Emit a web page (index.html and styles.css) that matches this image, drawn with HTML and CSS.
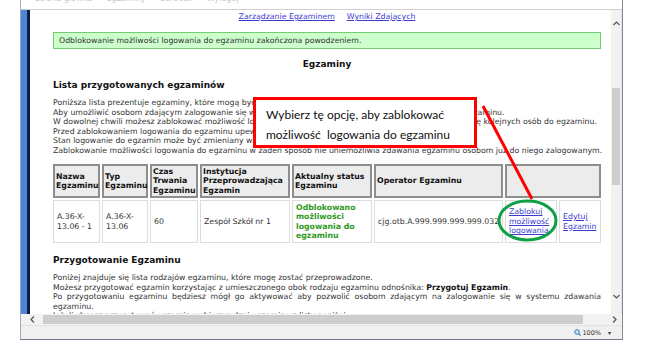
FILE: index.html
```html
<!DOCTYPE html>
<html lang="pl">
<head>
<meta charset="UTF-8">
<meta name="viewport" content="width=device-width, initial-scale=1.0">
<title>Egzaminy</title>
<link rel="stylesheet" href="styles.css">
</head>
<body>

<div class="window">
    <div class="toolbar"><span>Strona główna</span><span>Egzaminy</span><span>Ośrodek</span><span>Wyloguj</span></div>
    <div class="middle">
        <div class="frame-left"></div>
        <div class="page">
            <div class="menu">
                <a href="#">Zarządzanie Egzaminem</a>
                <a href="#">Wyniki Zdających</a>
            </div>
            <div class="notice">Odblokowanie możliwości logowania do egzaminu zakończona powodzeniem.</div>
            <h2>Egzaminy</h2>
            <h3>Lista przygotowanych egzaminów</h3>
            <p class="info">
                Poniższa lista prezentuje egzaminy, które mogą być przeprowadzone w ośrodku.<br>
                Aby umożliwić osobom zdającym zalogowanie się w systemie musisz najpierw odblokować logowanie do egzaminu.<br>
                W dowolnej chwili możesz zablokować możliwość logowania do egzaminu, żeby uniemożliwić zalogowanie się kolejnych osób do egzaminu.<br>
                Przed zablokowaniem logowania do egzaminu upewnij się, że wszyscy zdający zalogowali się do egzaminu.<br>
                Stan logowanie do egzamin może być zmieniany wielokrotnie.<br>
                Zablokowanie możliwości logowania do egzaminu w żaden sposób nie uniemożliwia zdawania egzaminu osobom już do niego zalogowanym.
            </p>
            <table class="exams">
                <colgroup>
                    <col style="width:47px"><col style="width:46px"><col style="width:48px"><col style="width:90px">
                    <col style="width:80px"><col style="width:129px"><col style="width:52px"><col style="width:42px">
                </colgroup>
                <tr class="head">
                    <th>Nazwa Egzaminu</th>
                    <th>Typ Egzaminu</th>
                    <th>Czas Trwania Egzaminu</th>
                    <th>Instytucja Przeprowadzająca Egzamin</th>
                    <th>Aktualny status Egzaminu</th>
                    <th>Operator Egzaminu</th>
                    <th colspan="2"></th>
                </tr>
                <tr class="row">
                    <td>A.36-X-<br>13.06 - 1</td>
                    <td>A.36-X-<br>13.06</td>
                    <td>60</td>
                    <td>Zespół Szkół nr 1</td>
                    <td class="status-ok">Odblokowano możliwości logowania do egzaminu</td>
                    <td>cjg.otb.A.999.999.999.999.032</td>
                    <td><a href="#">Zablokuj możliwość logowania</a></td>
                    <td><a href="#">Edytuj Egzamin</a></td>
                </tr>
            </table>
            <h3 class="second">Przygotowanie Egzaminu</h3>
            <p class="info justify">
                Poniżej znajduje się lista rodzajów egzaminu, które mogę zostać przeprowadzone.<br>
                Możesz przygotować egzamin korzystając z umieszczonego obok rodzaju egzaminu odnośnika: <b>Przygotuj Egzamin</b>.<br>
                Po przygotowaniu egzaminu będziesz mógł go aktywować aby pozwolić osobom zdającym na zalogowanie się w systemu zdawania egzaminu.<br>
                Jeżeli chcesz przygotować egzamin wybierz rodzaj egzaminu z listy poniżej.
            </p>
        </div>
        <div class="vscroll">
            <div class="arrow top"><svg width="7" height="5" viewBox="0 0 7 5"><polyline points="0.5,4 3.5,1 6.5,4" fill="none" stroke="#555" stroke-width="1.2"/></svg></div>
            <div class="gap"></div>
            <div class="thumb"></div>
            <div class="rest"></div>
            <div class="arrow bottom"><svg width="7" height="5" viewBox="0 0 7 5"><polyline points="0.5,1 3.5,4 6.5,1" fill="none" stroke="#555" stroke-width="1.2"/></svg></div>
        </div>
    </div>
    <div class="hscroll">
        <div class="harrow left"><svg width="5" height="7" viewBox="0 0 5 7"><polyline points="4,0.5 1,3.5 4,6.5" fill="none" stroke="#555" stroke-width="1.2"/></svg></div>
        <div class="hthumb"></div>
        <div class="harrow right"><svg width="5" height="7" viewBox="0 0 5 7"><polyline points="1,0.5 4,3.5 1,6.5" fill="none" stroke="#555" stroke-width="1.2"/></svg></div>
        <div class="corner"></div>
    </div>
    <div class="status">
        <svg width="7" height="7" viewBox="0 0 7 7"><circle cx="3" cy="3" r="2.3" fill="#cfe3f7" stroke="#3a78c2" stroke-width="1"/><line x1="4.7" y1="4.7" x2="6.6" y2="6.6" stroke="#3a78c2" stroke-width="1.2"/></svg>
        <span class="zoom">100%</span>
        <span class="drop">▾</span>
    </div>
</div>

<div class="callout">Wybierz tę opcję, aby zablokować<br>możliwość&nbsp; logowania do egzaminu</div>

<svg class="marks" width="656" height="352" viewBox="0 0 656 352">
    <line x1="483" y1="106" x2="532" y2="199" stroke="#ff0000" stroke-width="3"/>
    <ellipse cx="527.5" cy="220.5" rx="28.5" ry="19.5" fill="none" stroke="#0f9f45" stroke-width="3"/>
</svg>

</body>
</html>
```

FILE: styles.css
```css
* {
    box-sizing: border-box;
}
body {
    margin: 0;
    width: 656px;
    height: 352px;
    background-color: #ffffff;
    font-family: "DejaVu Sans", Verdana, sans-serif;
    color: #333333;
    position: relative;
    overflow: hidden;
}
.window {
    margin-left: 20px;
    width: 603px;
    height: 340px;
    border-left: 1px solid #a3acb8;
    border-right: 1px solid #7d8896;
    border-bottom: 1px solid #6f7a88;
    display: flex;
    flex-direction: column;
}
.toolbar {
    height: 10px;
    overflow: hidden;
    border-bottom: 1px solid #d0d0d0;
    padding-left: 14px;
    display: flex;
    gap: 14px;
    font-size: 8px;
    line-height: 8px;
    color: #c8c8c8;
}
.toolbar span {
    margin-top: -5px;
}
.middle {
    height: 304px;
    display: flex;
}
.frame-left {
    width: 9px;
    background-color: #4d86d6;
    border-right: 3px solid #101c44;
}
.page {
    width: 581px;
    padding: 1px 10px 0 23px;
    overflow: hidden;
    font-size: 7.8px;
}
.menu {
    height: 12px;
    line-height: 12px;
    display: flex;
    justify-content: center;
    gap: 12px;
}
a {
    color: #3c3ccf;
}
.notice {
    margin-top: 9px;
    height: 17px;
    line-height: 15px;
    padding-left: 5px;
    background-color: #ccffcc;
    border: 1px solid #74cc74;
    color: #333333;
}
h2 {
    margin: 9px 0 0;
    height: 12px;
    line-height: 12px;
    font-size: 9px;
    text-align: center;
    color: #111111;
}
h3 {
    margin: 9px 0 0;
    height: 12px;
    line-height: 12px;
    font-size: 9px;
    color: #111111;
}
.info {
    margin: 7px 0 0;
    line-height: 9.5px;
    white-space: nowrap;
}
.info.justify {
    white-space: normal;
    text-align: justify;
}
.info b {
    color: #111111;
}
.exams {
    margin: 7px 0 0 -2px;
    width: 552px;
    table-layout: fixed;
    border-collapse: separate;
    border-spacing: 2px;
    font-size: 7.8px;
    line-height: 9.5px;
}
.exams th {
    background-color: #ececec;
    border: 2px solid #8e8e8e;
    padding: 0 1px;
    text-align: left;
    vertical-align: middle;
    color: #111111;
}
.exams .head {
    height: 34px;
}
.exams .row {
    height: 43px;
}
.exams td {
    border: 1px solid #dddddd;
    padding: 0 2px 0 3px;
    vertical-align: middle;
    color: #333333;
}
.exams .status-ok {
    color: #2f9a1c;
    font-weight: bold;
}
.second {
    margin-top: 9px;
}
.vscroll {
    width: 11px;
    background-color: #f2f2f2;
    border-right: 1px solid #dde3ea;
    display: flex;
    flex-direction: column;
}
.arrow {
    display: flex;
    justify-content: center;
    align-items: center;
}
.arrow.top {
    height: 26px;
}
.arrow.bottom {
    height: 20px;
    align-items: flex-start;
}
.vscroll .gap {
    height: 52px;
}
.vscroll .thumb {
    height: 97px;
    margin: 0 1px;
    background-color: #cdcdcd;
}
.vscroll .rest {
    flex: 1;
}
.hscroll {
    height: 11px;
    display: flex;
    background-color: #f2f2f2;
}
.harrow {
    display: flex;
    align-items: center;
    justify-content: center;
}
.harrow.left {
    width: 22px;
}
.hthumb {
    width: 540px;
    margin: 1px 0;
    background-color: #cdcdcd;
}
.harrow.right {
    width: 38px;
    justify-content: flex-end;
    padding-right: 4px;
}
.corner {
    flex: 1;
}
.status {
    height: 14px;
    background-color: #f0f0f0;
    border-top: 1px solid #e2e2e2;
    display: flex;
    justify-content: flex-end;
    align-items: center;
    gap: 1px;
    padding-right: 11px;
    font-size: 6.5px;
    color: #333333;
}
.status .drop {
    margin-left: 6px;
    font-size: 6px;
}
.callout {
    position: absolute;
    left: 253px;
    top: 97px;
    width: 224px;
    height: 51px;
    padding: 5px 0 0 10px;
    background-color: #ffffff;
    border: 3px solid #ff0000;
    font-family: Lato, "Open Sans", sans-serif;
    font-size: 12px;
    line-height: 20px;
    color: #111111;
}
.marks {
    position: absolute;
    left: 0;
    top: 0;
}
```
